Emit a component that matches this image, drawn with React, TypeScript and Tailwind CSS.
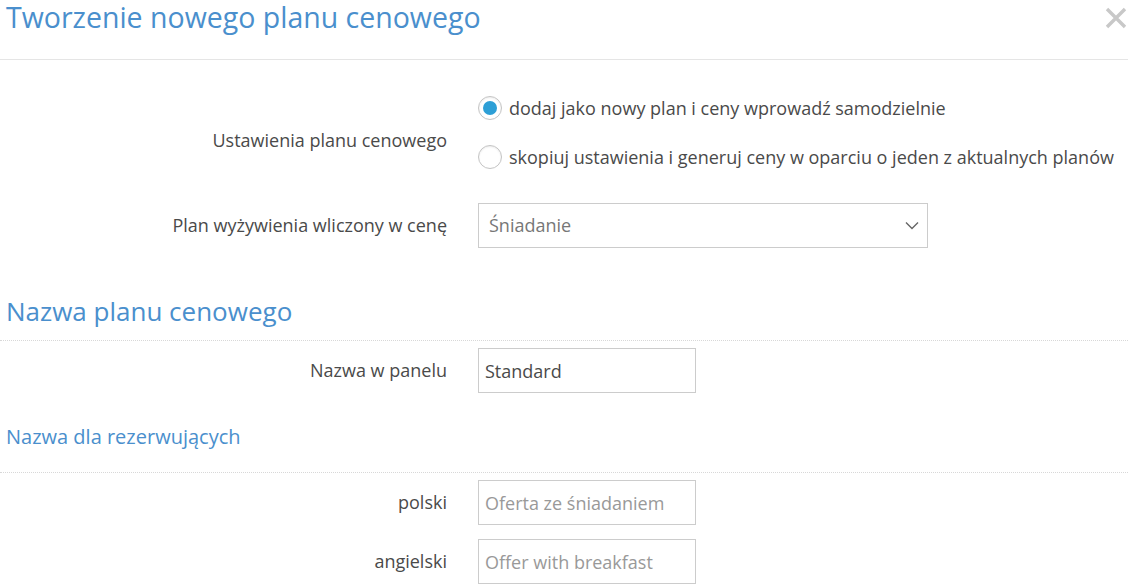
import React, { useState } from 'react';

function Radio({ checked, label, onClick }: { checked: boolean; label: string; onClick: () => void }) {
  return (
    <label className="flex items-center h-[24px] cursor-pointer" onClick={onClick}>
      <span className="w-[24px] h-[24px] rounded-full border border-[#c4c4c4] bg-white flex items-center justify-center shadow-[inset_0_1px_2px_rgba(0,0,0,0.08)]">
        {checked && <span className="w-[14px] h-[14px] rounded-full bg-[#2d9fd6]" />}
      </span>
      <span className="ml-[7px] text-[18px] leading-[24px] text-[#4a4a4a]">{label}</span>
    </label>
  );
}

function TextField({ value, placeholder }: { value?: string; placeholder?: string }) {
  return (
    <input
      defaultValue={value}
      placeholder={placeholder}
      className="w-[218px] h-[45px] border border-[#ccc] px-[6px] text-[18px] text-[#4a4a4a] placeholder:text-[#999] outline-none"
    />
  );
}

export default function App() {
  const [mode, setMode] = useState('new');

  return (
    <div className="w-[1128px] h-[586px] bg-white overflow-hidden font-['Open_Sans',sans-serif]">
      <div className="h-[60px] border-b border-[#e5e5e5] flex justify-between">
        <h1 className="pl-[6px] text-[28.5px] leading-[34px] text-[#4a8fcd] font-normal">
          Tworzenie nowego planu cenowego
        </h1>
        <button className="w-[22px] h-[22px] mt-[7px] mr-[1px] text-[#c8c8c8]">
          <svg viewBox="0 0 22 22" className="w-[22px] h-[22px]">
            <path d="M2 2 L20 20 M20 2 L2 20" stroke="currentColor" strokeWidth="3.4" />
          </svg>
        </button>
      </div>

      <div className="grid grid-cols-[447px_1fr] gap-x-[31px] pt-[36px]">
        <div className="text-right text-[18px] leading-[24px] text-[#4a4a4a] pt-[32px]">Ustawienia planu cenowego</div>
        <div className="flex flex-col gap-[25px]">
          <Radio checked={mode === 'new'} onClick={() => setMode('new')} label="dodaj jako nowy plan i ceny wprowadź samodzielnie" />
          <Radio checked={mode === 'copy'} onClick={() => setMode('copy')} label="skopiuj ustawienia i generuj ceny w oparciu o jeden z aktualnych planów" />
        </div>

        <div className="text-right text-[18px] text-[#4a4a4a] self-center mt-[34px]">Plan wyżywienia wliczony w cenę</div>
        <div className="mt-[34px] w-[450px] h-[45px] border border-[#ccc] flex items-center justify-between pl-[10px] pr-[8px]">
          <span className="text-[18px] text-[#777]">Śniadanie</span>
          <svg viewBox="0 0 14 9" className="w-[14px] h-[9px] text-[#666]">
            <path d="M1 1.5 L7 7.5 L13 1.5" fill="none" stroke="currentColor" strokeWidth="1.4" />
          </svg>
        </div>
      </div>

      <div className="mt-[45px] border-b border-dotted border-[#d8d8d8] pb-[11px]">
        <h2 className="pl-[6px] text-[26px] leading-[36px] text-[#4a8fcd] font-normal">Nazwa planu cenowego</h2>
      </div>

      <div className="grid grid-cols-[447px_1fr] gap-x-[31px] items-center mt-[7px]">
        <div className="text-right text-[18px] text-[#4a4a4a]">Nazwa w panelu</div>
        <TextField value="Standard" />
      </div>

      <div className="mt-[30px] border-b border-dotted border-[#d8d8d8] pb-[21px]">
        <h3 className="pl-[6px] text-[20px] leading-[28px] text-[#4a8fcd] font-normal">Nazwa dla rezerwujących</h3>
      </div>

      <div className="grid grid-cols-[447px_1fr] gap-x-[31px] gap-y-[14px] items-center mt-[7px]">
        <div className="text-right text-[18px] text-[#4a4a4a]">polski</div>
        <TextField placeholder="Oferta ze śniadaniem" />
        <div className="text-right text-[18px] text-[#4a4a4a]">angielski</div>
        <TextField placeholder="Offer with breakfast" />
      </div>
    </div>
  );
}
